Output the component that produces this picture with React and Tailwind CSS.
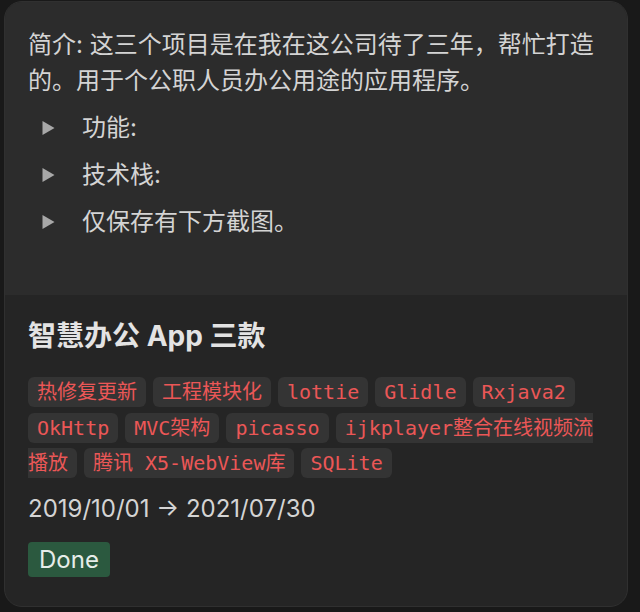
import React from 'react';

const sans = { fontFamily: 'Inter, "Noto Sans CJK SC", sans-serif' };
const mono = { fontFamily: '"DejaVu Sans Mono", "Noto Sans CJK SC", monospace' };

const tags = [
  '热修复更新', '工程模块化', 'lottie', 'Glidle', 'Rxjava2',
  'OkHttp', 'MVC架构', 'picasso', 'ijkplayer整合在线视频流播放',
  '腾讯 X5-WebView库', 'SQLite',
];

const toggles = ['功能:', '技术栈:', '仅保存有下方截图。'];

const Triangle = () => (
  <svg width="13" height="16" viewBox="0 0 13 16" className="shrink-0">
    <path d="M0.5 1 L12.5 8 L0.5 15 Z" fill="#a8a8a8" />
  </svg>
);

export default function App() {
  return (
    <div className="w-[640px] h-[612px] bg-[#191919] pt-px pl-1" style={sans}>
      <div className="w-[624px] h-[606px] rounded-[18px] border border-[#303030] bg-[#252525] overflow-hidden flex flex-col">
        {/* preview */}
        <div className="h-[293px] shrink-0 bg-[#2c2c2c] px-[23px] pt-[25px] text-[#d4d4d4] text-[24px] leading-[36px]">
          <p>简介: 这三个项目是在我在这公司待了三年，帮忙打造的。用于个公职人员办公用途的应用程序。</p>
          <div className="flex flex-col gap-[11px] mt-[11px]">
            {toggles.map(t => (
              <div key={t} className="flex items-center">
                <div className="w-[54px] pl-[14px] flex items-center"><Triangle /></div>
                <span>{t}</span>
              </div>
            ))}
          </div>
        </div>

        {/* body */}
        <div className="px-[23px] pt-[23px]">
          <h2 className="text-[28px] leading-[36px] font-bold text-[#e3e3e3]">智慧办公 App 三款</h2>
          <div className="mt-[21px] text-[20px] leading-[35.5px]" style={mono}>
            {tags.map(t => (
              <React.Fragment key={t}>
                <span className="bg-[#343434] text-[#eb5757] rounded-[6px] px-[9px] py-[3px] mr-[7px]">{t}</span>
                {'\u200B'}
              </React.Fragment>
            ))}
          </div>
          <div className="mt-[9px] text-[24px] leading-[36px] text-[#d4d4d4]">2019/10/01 → 2021/07/30</div>
          <div className="mt-[15px]">
            <span className="inline-block h-[35px] leading-[35px] px-[11px] rounded-[4px] bg-[#2b593f] text-[24px] text-[#e6ede9]">Done</span>
          </div>
        </div>
      </div>
    </div>
  );
}
